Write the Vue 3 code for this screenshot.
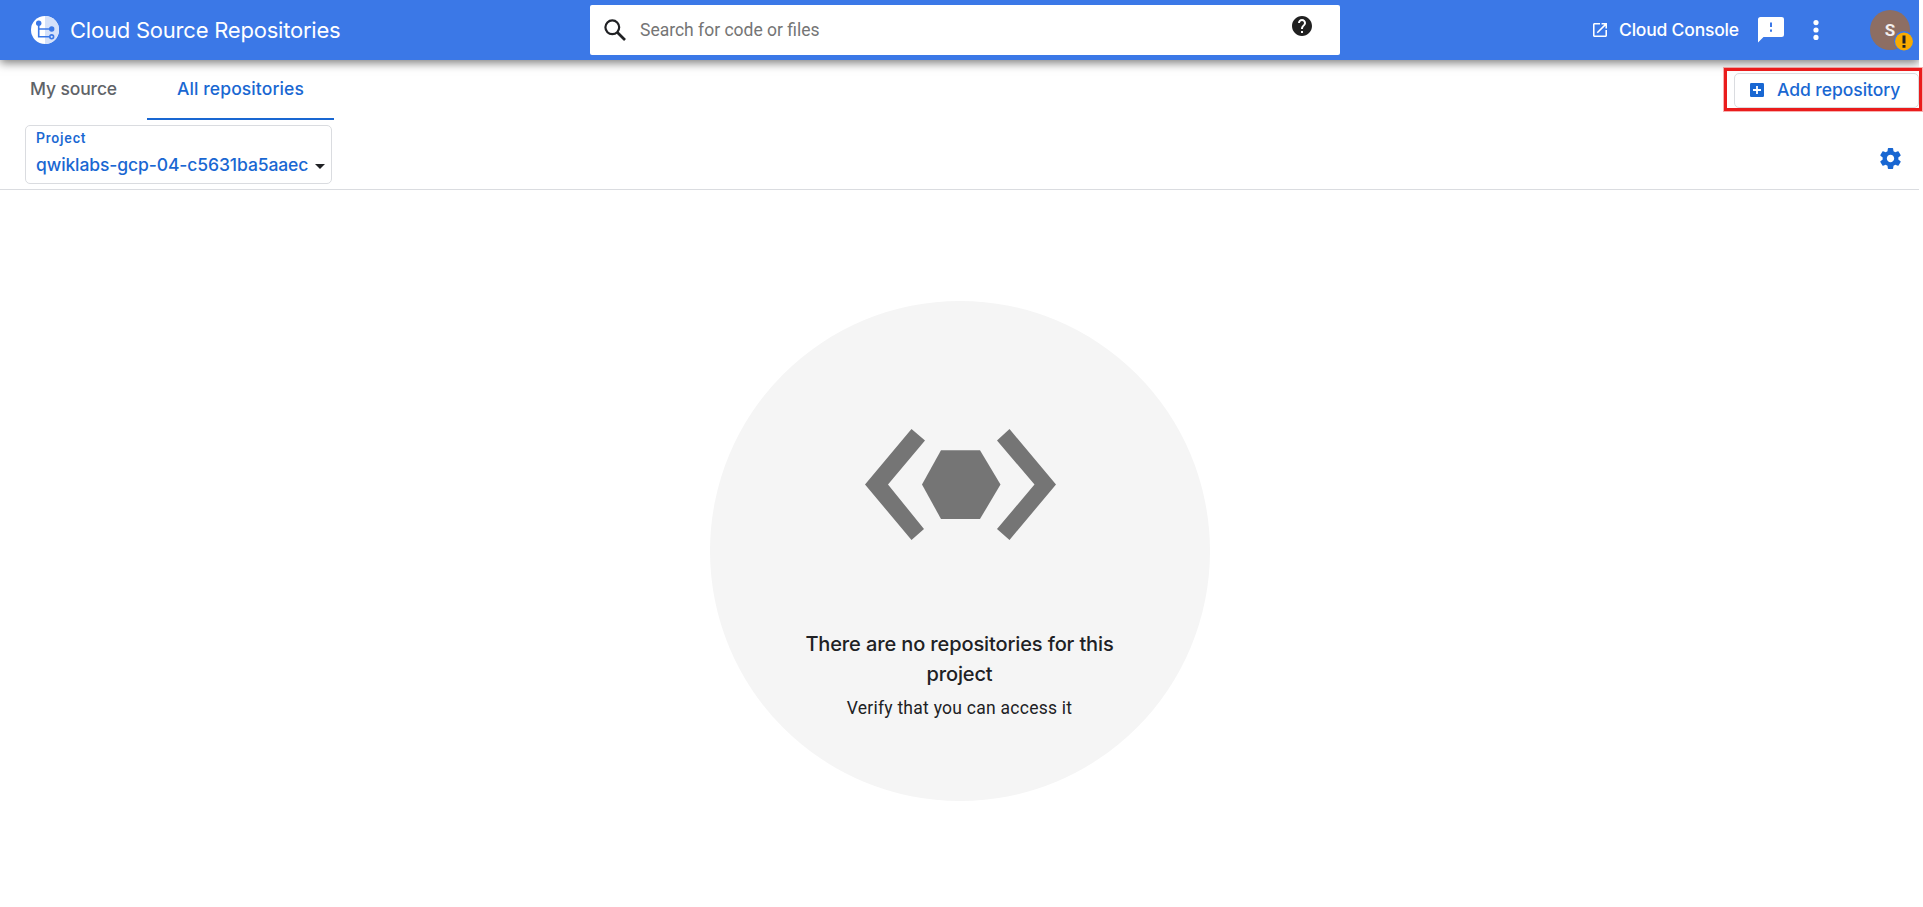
<script setup>
const tabs = [
  { label: 'My source', active: false },
  { label: 'All repositories', active: true },
]
</script>

<template>
  <div class="page">
    <header class="topbar">
      <div class="brand">
        <svg class="logo" viewBox="0 0 28 28">
          <circle cx="14" cy="14" r="14" fill="#fff" />
          <path d="M14 0a14 14 0 0 1 0 28z" fill="#d4e1fa" />
          <path d="M7.7 7.5V20.8H19M7.7 13H20" fill="none" stroke="#3b78e7" stroke-width="1.6" />
          <circle cx="7.7" cy="7.3" r="2.7" fill="#3b78e7" />
          <circle cx="20.7" cy="13" r="2.7" fill="#3b78e7" />
          <circle cx="20.7" cy="20.8" r="1.9" fill="#d4e1fa" stroke="#3b78e7" stroke-width="1.6" />
        </svg>
        <span class="brand-name">Cloud Source Repositories</span>
      </div>
      <div class="search">
        <svg class="search-icon" viewBox="0 0 22 22">
          <circle cx="8.3" cy="8.3" r="6.9" fill="none" stroke="#202124" stroke-width="2.2" />
          <path d="M13.2 13.2L21 21" stroke="#202124" stroke-width="2.7" />
        </svg>
        <span class="placeholder">Search for code or files</span>
        <svg class="help" viewBox="2 2 20 20">
          <path fill="#212121" d="M12 2C6.48 2 2 6.48 2 12s4.48 10 10 10 10-4.48 10-10S17.52 2 12 2zm1 17h-2v-2h2v2zm2.07-7.75l-.9.92C13.45 12.9 13 13.5 13 15h-2v-.5c0-1.1.45-2.1 1.17-2.83l1.24-1.26c.37-.36.59-.86.59-1.41 0-1.1-.9-2-2-2s-2 .9-2 2H8c0-2.21 1.79-4 4-4s4 1.79 4 4c0 .88-.36 1.68-.93 2.25z" />
        </svg>
      </div>
      <div class="actions">
        <svg class="launch" viewBox="3 3 18 18">
          <path fill="#fff" d="M19 19H5V5h7V3H5c-1.11 0-2 .9-2 2v14c0 1.1.89 2 2 2h14c1.1 0 2-.9 2-2v-7h-2v7zM14 3v2h3.59l-9.83 9.83 1.41 1.41L19 6.41V10h2V3h-7z" />
        </svg>
        <span class="console">Cloud Console</span>
        <svg class="feedback" viewBox="0 0 26 26">
          <path fill="#fff" d="M2.5 0h21A2.5 2.5 0 0 1 26 2.5v15a2.5 2.5 0 0 1-2.5 2.5H5.5L0 25.5V2.5A2.5 2.5 0 0 1 2.5 0z" />
          <path fill="#3b78e7" d="M12 5.5h2V10h-2zM12 12.5h2v2.3h-2z" />
        </svg>
        <svg class="more" viewBox="0 0 6 20">
          <circle cx="3" cy="2.6" r="2.6" fill="#fff" />
          <circle cx="3" cy="10" r="2.6" fill="#fff" />
          <circle cx="3" cy="17.4" r="2.6" fill="#fff" />
        </svg>
        <div class="avatar">
          <span>S</span>
          <svg class="alert" viewBox="0 0 20 20">
            <circle cx="10" cy="10" r="10" fill="#3b78e7" />
            <circle cx="10" cy="10.5" r="8.9" fill="#f9ab00" />
            <path fill="#202124" d="M8.5 4.5h3v8h-3zM8.5 14h3v2.8h-3z" />
          </svg>
        </div>
      </div>
    </header>

    <section class="toolbar">
      <div class="tab-row">
        <nav class="tabs">
          <div v-for="t in tabs" :key="t.label" class="tab" :class="{ active: t.active }">
            <span>{{ t.label }}</span>
          </div>
        </nav>
        <div class="add">
          <svg class="plus" viewBox="0 0 14 14">
            <rect width="14" height="14" rx="1.2" fill="#1967d2" />
            <path d="M7 3v8M3 7h8" stroke="#fff" stroke-width="1.8" />
          </svg>
          <span class="add-text">Add repository</span>
        </div>
      </div>
      <div class="project-row">
        <div class="project">
          <span class="project-label">Project</span>
          <div class="project-value">
            <span class="project-name">qwiklabs-gcp-04-c5631ba5aaec</span>
            <svg class="caret" viewBox="0 0 10 5"><path d="M0 0h10L5 5z" fill="#202124" /></svg>
          </div>
        </div>
        <svg class="gear" viewBox="2 2 20 20">
          <path fill="#1967d2" d="M19.43 12.98c.04-.32.07-.64.07-.98s-.03-.66-.07-.98l2.11-1.65c.19-.15.24-.42.12-.64l-2-3.46c-.12-.22-.39-.3-.61-.22l-2.49 1c-.52-.4-1.08-.73-1.69-.98l-.38-2.65C14.46 2.18 14.25 2 14 2h-4c-.25 0-.46.18-.49.42l-.38 2.65c-.61.25-1.17.59-1.69.98l-2.49-1c-.23-.09-.49 0-.61.22l-2 3.46c-.13.22-.07.49.12.64l2.11 1.65c-.04.32-.07.65-.07.98s.03.66.07.98l-2.11 1.65c-.19.15-.24.42-.12.64l2 3.46c.12.22.39.3.61.22l2.49-1c.52.4 1.08.73 1.69.98l.38 2.65c.03.24.24.42.49.42h4c.25 0 .46-.18.49-.42l.38-2.65c.61-.25 1.17-.59 1.69-.98l2.49 1c.23.09.49 0 .61-.22l2-3.46c.12-.22.07-.49-.12-.64l-2.11-1.65zM12 15.5c-1.93 0-3.5-1.57-3.5-3.5s1.57-3.5 3.5-3.5 3.5 1.57 3.5 3.5-1.57 3.5-3.5 3.5z" />
        </svg>
      </div>
    </section>

    <main class="content">
      <div class="empty">
        <svg class="empty-icon" viewBox="0 0 192 112">
          <g fill="#757575">
            <path d="M46.5 0L60 11.5L23 55.5L59 100L46.5 111L0 55.5z" />
            <path d="M144.5 0L132 11.5L169.5 55.5L132 100L144.5 111L191 55.5z" />
            <path d="M76 21.3H115L135.5 55.5L115 90H76L57 55.5z" />
          </g>
        </svg>
        <h1 class="empty-title">There are no repositories for this<br />project</h1>
        <p class="empty-note">Verify that you can access it</p>
      </div>
    </main>

    <div class="highlight"></div>
  </div>
</template>

<style>
body { background: #fff; overflow: hidden; }
</style>

<style scoped>
.page {
  position: relative;
  width: 1923px;
  height: 907px;
  overflow: hidden;
  font-family: Inter, "Noto Sans", sans-serif;
  color: #202124;
}
svg { display: block; flex: none; }
span { white-space: nowrap; }
.topbar {
  display: grid;
  grid-template-columns: 590px 750px 579px;
  align-items: center;
  width: 1919px;
  height: 60px;
  background: #3b78e7;
  box-shadow: 0 3px 9px rgba(0, 0, 0, 0.5);
  clip-path: inset(0 0 -20px 0);
}
.brand { display: flex; align-items: center; padding-left: 31px; }
.logo { width: 28px; height: 28px; }
.brand-name { margin-left: 11px; font-size: 22px; line-height: 30px; color: #fff; letter-spacing: -0.22px; }
.search {
  display: flex;
  align-items: center;
  height: 50px;
  background: #fff;
  border-radius: 2px;
}
.search-icon { width: 22px; height: 22px; margin-left: 14px; }
.placeholder {
  flex: 1;
  margin-left: 14px;
  font: 17.5px/24px Roboto, sans-serif;
  color: #757575;
}
.help { width: 20px; height: 20px; margin: 0 28px 8px 0; }
.actions { display: flex; align-items: center; color: #fff; }
.launch { width: 14px; height: 14px; margin-left: 253px; }
.console { width: 119px; margin: 0 0 1px 12px; font-size: 17.5px; line-height: 25px; font-weight: 500; letter-spacing: -0.2px; }
.feedback { width: 26px; height: 26px; margin-left: 20px; }
.more { width: 6px; height: 20px; margin-left: 29px; }
.avatar {
  position: relative;
  display: flex;
  align-items: center;
  justify-content: center;
  width: 40px;
  height: 40px;
  margin-left: 51px;
  border-radius: 50%;
  background: #8d6e63;
  font: 700 17px/20px Roboto, sans-serif;
  color: #f3efee;
}
.alert { position: absolute; left: 24px; top: 21px; width: 20px; height: 20px; }

.toolbar { width: 1919px; height: 129px; border-bottom: 1px solid #dadce0; }
.tab-row { display: flex; justify-content: space-between; height: 60px; }
.tabs { display: flex; }
.tab {
  display: flex;
  justify-content: center;
  box-sizing: border-box;
  width: 147px;
  height: 60px;
  padding-top: 17px;
  font-size: 17.5px;
  line-height: 24px;
  font-weight: 500;
  letter-spacing: -0.12px;
  color: #5f6368;
}
.tab.active { width: 187px; color: #1967d2; border-bottom: 2px solid #1967d2; letter-spacing: 0.1px; }
.add {
  display: flex;
  align-items: center;
  box-sizing: border-box;
  width: 185px;
  height: 35px;
  margin-top: 13px;
  padding-left: 15px;
  border: 1px solid #dadce0;
  border-radius: 5px;
  color: #1967d2;
}
.plus { width: 14px; height: 14px; margin-bottom: 1px; }
.add-text { margin: 0 0 2px 13px; font-size: 17.5px; line-height: 24px; font-weight: 500; letter-spacing: -0.05px; }
.project-row {
  display: flex;
  justify-content: space-between;
  padding: 5px 18px 0 25px;
}
.project {
  box-sizing: border-box;
  width: 307px;
  height: 59px;
  padding: 2px 6px 0 10px;
  border: 1px solid #dadce0;
  border-radius: 5px;
  color: #1967d2;
}
.project-label { display: block; font: 500 14px/20px Roboto, sans-serif; letter-spacing: 0.8px; }
.project-value { display: flex; align-items: center; justify-content: space-between; margin-top: 5px; }
.project-name { font-size: 17.5px; line-height: 24px; font-weight: 500; letter-spacing: -0.1px; }
.caret { width: 10px; height: 5px; margin-top: 3px; }
.gear { width: 21px; height: 21px; margin-top: 23px; }

.content { display: flex; justify-content: center; width: 1919px; padding-top: 111px; }
.empty {
  display: flex;
  flex-direction: column;
  align-items: center;
  width: 500px;
  height: 500px;
  border-radius: 50%;
  background: #f5f5f5;
}
.empty-icon { width: 192px; height: 112px; margin: 128px 0 0 2px; }
.empty-title {
  margin: 88px 0 0;
  font-size: 20px;
  line-height: 30px;
  font-weight: 500;
  letter-spacing: -0.12px;
  text-align: center;
  white-space: nowrap;
}
.empty-note { margin: 7px 0 0; font: 17.5px/24px Roboto, sans-serif; letter-spacing: 0.26px; }

/* callout frame laid over the add button */
.highlight {
  position: absolute;
  left: 1723px;
  top: 67px;
  box-sizing: border-box;
  width: 200px;
  height: 45px;
  border: 1px solid rgba(234, 28, 28, 0.35);
  box-shadow: inset 0 0 0 3px #ea1c1c;
}
</style>
